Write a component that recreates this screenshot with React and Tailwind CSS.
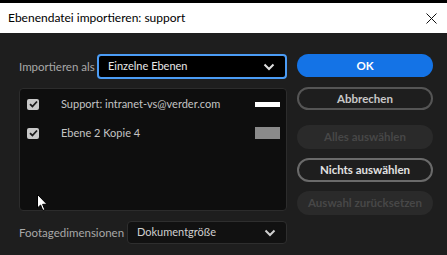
import React from "react";

function Check() {
  return (
    <div className="w-[12px] h-[11px] rounded-[2px] bg-[#c8c8c8] flex items-center justify-center shrink-0">
      <svg width="9" height="8" viewBox="0 0 9 8"><path d="M1 4.2 L3.4 6.5 L8 1.5" stroke="#1a1a1a" strokeWidth="1.8" fill="none" /></svg>
    </div>
  );
}

function Chevron({ color = "#d0d0d0" }) {
  return (
    <svg width="12" height="8" viewBox="0 0 12 8"><path d="M1.5 1.5 L6 6 L10.5 1.5" stroke={color} strokeWidth="2" fill="none" /></svg>
  );
}

export default function App() {
  return (
    <div className="w-[447px] h-[255px] bg-black flex flex-col overflow-hidden relative whitespace-nowrap" style={{ fontFamily: "Lato, 'Noto Sans', sans-serif" }}>
      <div className="mt-[3px] h-[30px] bg-white flex items-center justify-between pl-[8px] pr-[10px]">
        <span className="text-[12px] text-black">Ebenendatei importieren: support</span>
        <svg width="11" height="11" viewBox="0 0 11 11"><path d="M0.5 0.5 L10.5 10.5 M10.5 0.5 L0.5 10.5" stroke="#111" strokeWidth="1" /></svg>
      </div>
      <div className="flex-1 bg-[#1e1e1e] flex pl-[19px] pr-[14px] pt-[21px]">
        <div className="w-[268px] flex flex-col">
          <div className="flex items-center h-[25px]">
            <span className="text-[11.5px] text-[#a8a8a8] w-[78px] shrink-0">Importieren als</span>
            <div className="flex-1 h-[25px] bg-black border-2 border-[#4b9cf5] rounded-[4px] flex items-center justify-between pl-[9px] pr-[10px]">
              <span className="text-[11px] text-[#e8e8e8]">Einzelne Ebenen</span>
              <Chevron color="#e0e0e0" />
            </div>
          </div>
          <div className="mt-[9px] h-[123px] bg-[#0e0e0e] border border-[#2c2c2c] rounded-[4px] flex flex-col pt-[9px]">
            <div className="flex items-center h-[12px] pl-[7px] pr-[6px]">
              <Check />
              <span className="ml-[22px] text-[11px] text-[#c4c4c4] flex-1">Support: intranet-vs@verder.com</span>
              <div className="w-[25px] h-[5px] bg-white" />
            </div>
            <div className="flex items-center h-[12px] mt-[17px] pl-[7px] pr-[6px]">
              <Check />
              <span className="ml-[22px] text-[11px] text-[#c4c4c4] flex-1">Ebene 2 Kopie 4</span>
              <div className="w-[25px] h-[12px] bg-[#8a8a8a]" />
            </div>
          </div>
          <div className="mt-[10px] flex items-center h-[23px]">
            <span className="text-[11.5px] text-[#a8a8a8] w-[108px] shrink-0">Footagedimensionen</span>
            <div className="flex-1 h-[23px] bg-[#111111] border border-[#2e2e2e] rounded-[4px] flex items-center justify-between pl-[9px] pr-[10px]">
              <span className="text-[11px] text-[#d0d0d0]">Dokumentgröße</span>
              <Chevron />
            </div>
          </div>
        </div>
        <div className="ml-[10px] w-[136px] flex flex-col">
          <div className="h-[23px] rounded-full bg-[#1473e6] flex items-center justify-center text-[11.5px] font-bold text-white">OK</div>
          <div className="mt-[10px] h-[23px] rounded-full border-2 border-[#555555] flex items-center justify-center text-[11.5px] font-bold text-[#c8c8c8]">Abbrechen</div>
          <div className="mt-[15px] h-[24px] rounded-full bg-[#2a2a2a] flex items-center justify-center text-[11.5px] font-bold text-[#474747]">Alles auswählen</div>
          <div className="mt-[9px] h-[24px] rounded-full border-2 border-[#6a6a6a] flex items-center justify-center text-[11.5px] font-bold text-[#e2e2e2]">Nichts auswählen</div>
          <div className="mt-[9px] h-[24px] rounded-full bg-[#2a2a2a] flex items-center justify-center text-[11.5px] font-bold text-[#474747]">Auswahl zurücksetzen</div>
        </div>
      </div>
      <svg className="absolute left-[37px] top-[194px]" width="12" height="18" viewBox="0 0 12 18">
        <path d="M0.5 0.5 L0.5 14 L3.6 11 L5.8 16.5 L7.8 15.6 L5.6 10.3 L10 10.3 Z" fill="white" stroke="black" strokeWidth="1" />
      </svg>
    </div>
  );
}
